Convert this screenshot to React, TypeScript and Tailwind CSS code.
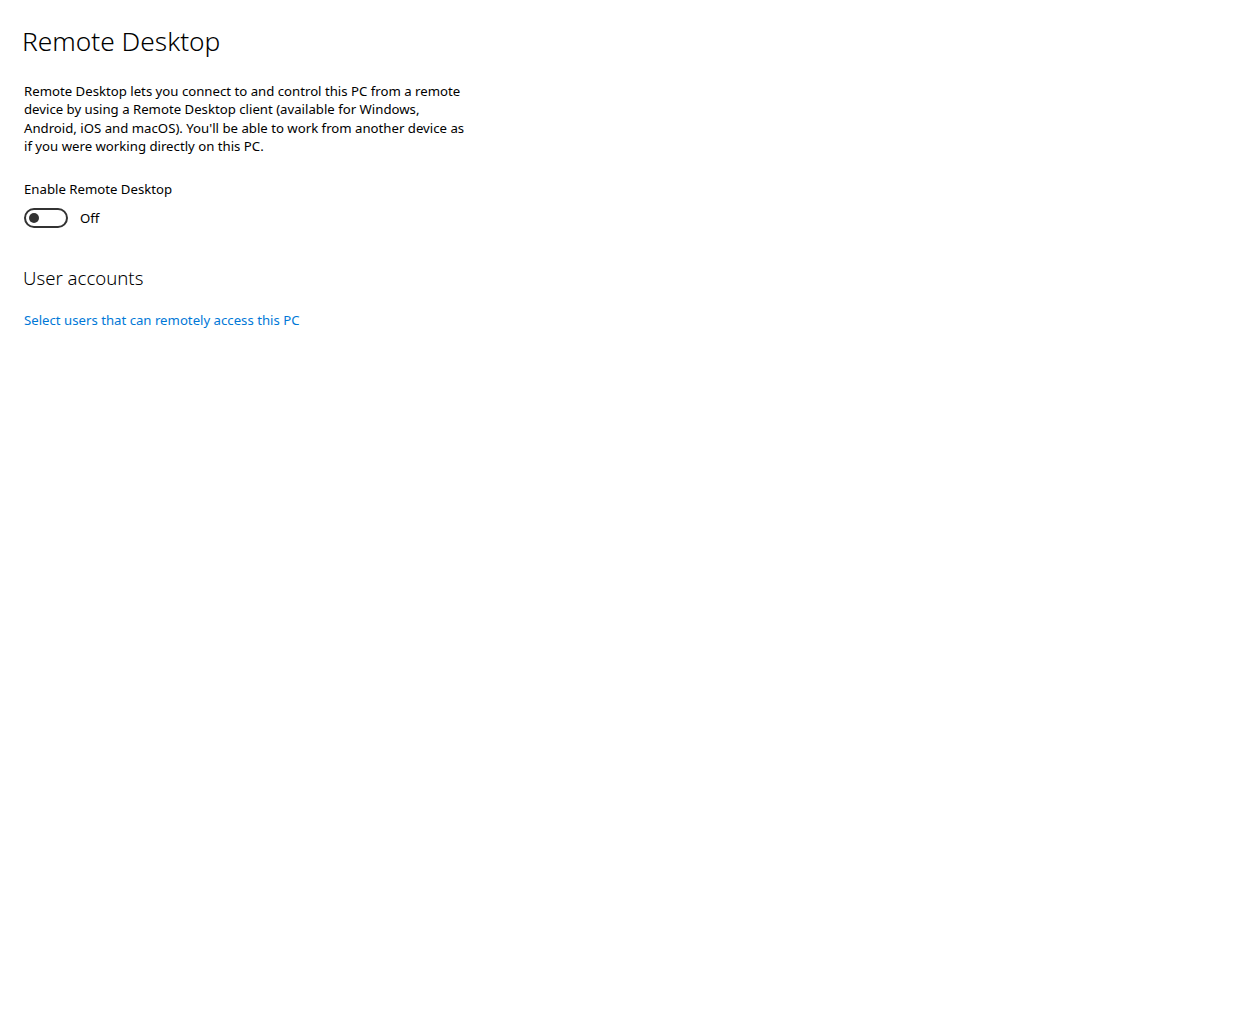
// Remote Desktop settings page

const font = { fontFamily: '"Noto Sans", "Open Sans", sans-serif' };

const Toggle = ({ on = false }: { on?: boolean }) => (
  <div className="flex items-center gap-3">
    <div className="flex h-5 w-11 items-center rounded-full border-2 border-[#333333] px-[3px]">
      <div className="h-[10px] w-[10px] rounded-full bg-[#333333]" />
    </div>
    <span className="text-[13.2px] leading-5 text-black">{on ? "On" : "Off"}</span>
  </div>
);

export default function App() {
  return (
    <div className="min-h-[1010px] w-full bg-white pl-6 pt-[23px] text-black" style={font}>
      <h1 className="-ml-[2px] text-[26.3px] font-light leading-9 text-black">Remote Desktop</h1>

      <p className="mt-[23px] w-[448px] text-[13.2px] leading-[18.4px]">
        Remote Desktop lets you connect to and control this PC from a remote device by using a Remote
        Desktop client (available for Windows, Android, iOS and macOS). You'll be able to work from
        another device as if you were working directly on this PC.
      </p>

      <div className="mt-[24px] text-[13.2px] leading-[18.5px]">Enable Remote Desktop</div>
      <div className="mt-[10px]">
        <Toggle />
      </div>

      <h2 className="-ml-px mt-[36px] text-[18.6px] font-light leading-7">User accounts</h2>

      <a href="#" className="mt-[19px] block text-[13.2px] leading-[19px] text-[#0078d7]">
        Select users that can remotely access this PC
      </a>
    </div>
  );
}
